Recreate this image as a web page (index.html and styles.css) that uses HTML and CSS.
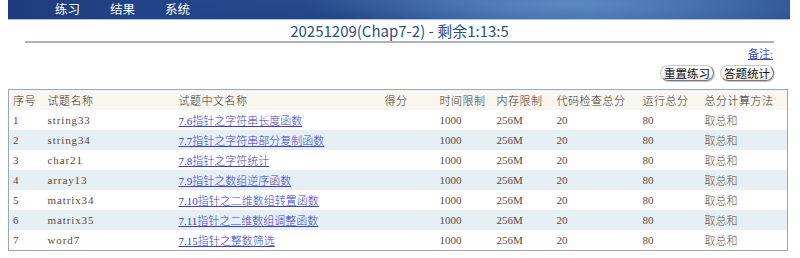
FILE: index.html
```html
<!DOCTYPE html>
<html lang="zh-CN">
<head>
    <meta charset="UTF-8">
    <title>练习 - 20251209(Chap7-2)</title>
    <link rel="stylesheet" href="styles.css">
</head>
<body>
    <div class="page">
        <div class="banner">
            <ul class="nav">
                <li>练习</li>
                <li>结果</li>
                <li>系统</li>
            </ul>
        </div>

        <h1 class="title">20251209(Chap7-2) - 剩余1:13:5</h1>

        <div class="note-row"><a href="#" class="note">备注:</a></div>
        <div class="btn-row">
            <button class="pill">重置练习</button>
            <button class="pill">答题统计</button>
        </div>

        <table class="problems">
            <colgroup>
                <col style="width:35px">
                <col style="width:131px">
                <col style="width:206px">
                <col style="width:55px">
                <col style="width:57px">
                <col style="width:60px">
                <col style="width:86px">
                <col style="width:62px">
                <col>
            </colgroup>
            <thead>
                <tr>
                    <th>序号</th><th>试题名称</th><th>试题中文名称</th><th>得分</th><th>时间限制</th><th>内存限制</th><th>代码检查总分</th><th>运行总分</th><th>总分计算方法</th>
                </tr>
            </thead>
            <tbody>
                <tr><td>1</td><td>string33</td><td><a href="#">7.6指针之字符串长度函数</a></td><td></td><td>1000</td><td>256M</td><td>20</td><td>80</td><td>取总和</td></tr>
                <tr><td>2</td><td>string34</td><td><a href="#">7.7指针之字符串部分复制函数</a></td><td></td><td>1000</td><td>256M</td><td>20</td><td>80</td><td>取总和</td></tr>
                <tr><td>3</td><td>char21</td><td><a href="#">7.8指针之字符统计</a></td><td></td><td>1000</td><td>256M</td><td>20</td><td>80</td><td>取总和</td></tr>
                <tr><td>4</td><td>array13</td><td><a href="#">7.9指针之数组逆序函数</a></td><td></td><td>1000</td><td>256M</td><td>20</td><td>80</td><td>取总和</td></tr>
                <tr><td>5</td><td>matrix34</td><td><a href="#">7.10指针之二维数组转置函数</a></td><td></td><td>1000</td><td>256M</td><td>20</td><td>80</td><td>取总和</td></tr>
                <tr><td>6</td><td>matrix35</td><td><a href="#">7.11指针之二维数组调整函数</a></td><td></td><td>1000</td><td>256M</td><td>20</td><td>80</td><td>取总和</td></tr>
                <tr><td>7</td><td>word7</td><td><a href="#">7.15指针之整数筛选</a></td><td></td><td>1000</td><td>256M</td><td>20</td><td>80</td><td>取总和</td></tr>
            </tbody>
        </table>
    </div>
</body>
</html>
```

FILE: styles.css
```css
body {
    margin: 0;
    background: #fff;
    font-family: "Liberation Serif", "Noto Sans CJK SC", serif;
}
.page {
    padding: 0 9px 0 8px;
}
.banner {
    height: 19px;
    margin-right: 1px;
    border-bottom: 1px solid #a9c4ea;
    background:
        radial-gradient(ellipse 260px 30px at 560px 4px, rgba(120, 165, 215, 0.55), rgba(120, 165, 215, 0) 100%),
        radial-gradient(ellipse 200px 40px at 330px 30px, rgba(20, 45, 110, 0.5), rgba(20, 45, 110, 0) 100%),
        linear-gradient(90deg, #1d3c7e 0%, #24468a 25%, #335f9f 55%, #3a68a8 75%, #2c5494 100%);
}
.nav {
    list-style: none;
    margin: 0;
    padding: 0 0 0 47px;
    display: flex;
    gap: 30px;
}
.nav li {
    color: #fff;
    font-family: "Noto Sans CJK SC", sans-serif;
    font-size: 12.5px;
    line-height: 15px;
    padding-top: 1px;
}
.title {
    margin: 1px 17px 0 17px;
    padding: 0;
    text-align: center;
    font-family: "Noto Sans CJK SC", sans-serif;
    font-weight: normal;
    font-size: 15px;
    line-height: 20px;
    color: #2c4f80;
    border-bottom: 2px solid #a9b3c6;
}
.note-row {
    text-align: right;
    padding-right: 18px;
    height: 14px;
    margin-top: 4px;
    font-size: 11px;
    line-height: 14px;
}
.note {
    color: #3a4fd0;
}
.btn-row {
    display: flex;
    justify-content: flex-end;
    gap: 6px;
    padding-right: 17px;
    margin-top: 4px;
}
.pill {
    font-family: "Noto Sans CJK SC", sans-serif;
    font-size: 11.5px;
    line-height: 13px;
    height: 16px;
    padding: 0 3px;
    color: #111;
    border: 1px solid #c9c9c9;
    border-right-color: #777;
    border-bottom-color: #777;
    border-radius: 8px;
    background: linear-gradient(#ffffff, #ececec);
    box-shadow: 1px 1px 1px rgba(0, 0, 0, 0.25);
}
.problems {
    margin-top: 8px;
    width: 780px;
    table-layout: fixed;
    border-collapse: collapse;
    border: 1px solid #95a6bf;
    font-size: 11px;
    font-weight: 300;
}
.problems th,
.problems td {
    height: 20px;
    padding: 0 0 0 4px;
    text-align: left;
    white-space: nowrap;
    overflow: hidden;
}
.problems th {
    font-weight: 300;
    color: #333;
    background: #f8f6ee;
    letter-spacing: 0.5px;
}
.problems td {
    color: #5b4a3a;
}
.problems td:nth-child(2) {
    letter-spacing: 0.9px;
}
.problems tbody tr:nth-child(even) td {
    background: #e6eff4;
}
.problems a {
    color: #3a3fd0;
}
```
